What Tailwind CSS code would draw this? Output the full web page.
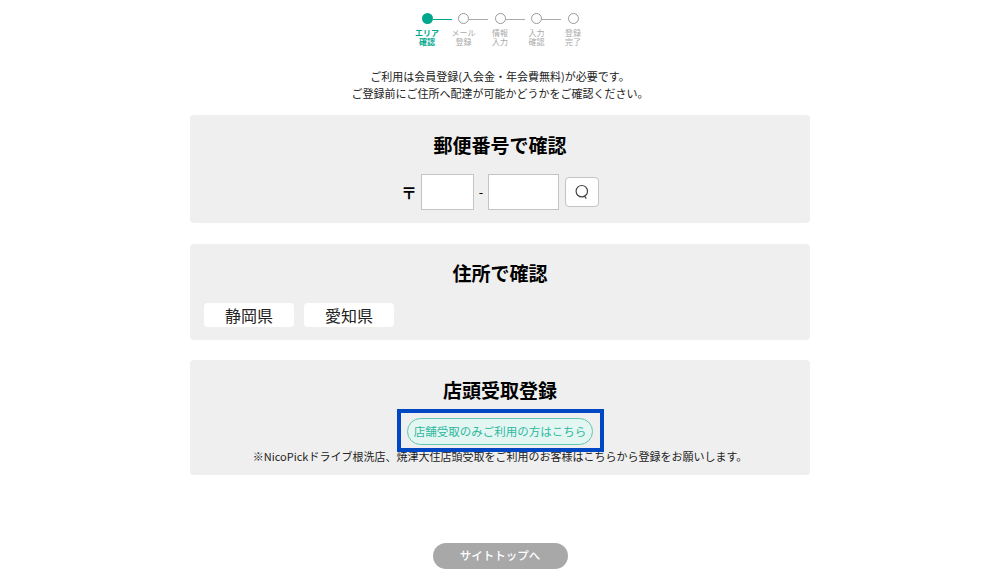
<!DOCTYPE html>
<html lang="ja">
<head>
<meta charset="utf-8">
<script src="https://cdn.jsdelivr.net/npm/@tailwindcss/browser@4"></script>
</head>
<body class="bg-white text-black font-['Noto_Sans_CJK_JP','Noto_Sans',sans-serif]">
<div class="relative w-[1000px] h-[578px] overflow-hidden flex flex-col items-center">
  <div class="flex pt-[13px] h-[68px] justify-center">
    <div class="w-[36.5px] relative flex flex-col items-center">
      <span class="absolute left-[24px] top-[5.5px] w-[19px] h-px bg-[#00a78e]"></span>
      <span class="w-[11px] h-[11px] rounded-full bg-[#00a78e]"></span>
      <span class="text-[8px] leading-[9px] mt-[4px] text-center font-bold text-[#00a78e] whitespace-nowrap">エリア<br>確認</span>
    </div>
    <div class="w-[36.5px] relative flex flex-col items-center">
      <span class="absolute left-[24px] top-[5.5px] w-[19px] h-px bg-[#aaaaaa]"></span>
      <span class="w-[11px] h-[11px] rounded-full border border-[#999999] bg-white"></span>
      <span class="text-[8px] leading-[9px] mt-[4px] text-center text-[#aaaaaa] whitespace-nowrap">メール<br>登録</span>
    </div>
    <div class="w-[36.5px] relative flex flex-col items-center">
      <span class="absolute left-[24px] top-[5.5px] w-[19px] h-px bg-[#aaaaaa]"></span>
      <span class="w-[11px] h-[11px] rounded-full border border-[#999999] bg-white"></span>
      <span class="text-[8px] leading-[9px] mt-[4px] text-center text-[#aaaaaa] whitespace-nowrap">情報<br>入力</span>
    </div>
    <div class="w-[36.5px] relative flex flex-col items-center">
      <span class="absolute left-[24px] top-[5.5px] w-[19px] h-px bg-[#aaaaaa]"></span>
      <span class="w-[11px] h-[11px] rounded-full border border-[#999999] bg-white"></span>
      <span class="text-[8px] leading-[9px] mt-[4px] text-center text-[#aaaaaa] whitespace-nowrap">入力<br>確認</span>
    </div>
    <div class="w-[36.5px] relative flex flex-col items-center">
      <span class="w-[11px] h-[11px] rounded-full border border-[#999999] bg-white"></span>
      <span class="text-[8px] leading-[9px] mt-[4px] text-center text-[#aaaaaa] whitespace-nowrap">登録<br>完了</span>
    </div>
  </div>

  <p class="text-[11px] leading-[17px] text-center text-[#222222]">ご利用は会員登録(入会金・年会費無料)が必要です。<br>ご登録前にご住所へ配達が可能かどうかをご確認ください。</p>

  <section class="mt-[13px] w-[620px] h-[108px] bg-[#efefef] rounded-[4px] flex flex-col items-center pt-[16px]">
    <h2 class="text-[19px] leading-[28px] font-bold">郵便番号で確認</h2>
    <div class="mt-[15px] flex items-center h-[36px]">
      <span class="text-[16px] font-bold mr-[4px]">〒</span>
      <span class="w-[53px] h-[36px] bg-white border border-[#c4c4c4]"></span>
      <span class="w-[14px] text-center text-[13px]">-</span>
      <span class="w-[71px] h-[36px] bg-white border border-[#c4c4c4]"></span>
      <span class="ml-[6px] w-[34px] h-[30px] bg-white border border-[#c4c4c4] rounded-[4px] flex items-center justify-center">
        <svg width="16" height="16" viewBox="0 0 16 16" fill="none" stroke="#444444" stroke-width="1.2"><circle cx="7.8" cy="7.2" r="5.7"/><path d="M10.5 12l1.8 2.6"/></svg>
      </span>
    </div>
  </section>

  <section class="mt-[21px] w-[620px] h-[96px] bg-[#efefef] rounded-[4px] flex flex-col pt-[15px]">
    <h2 class="text-[19px] leading-[28px] font-bold text-center">住所で確認</h2>
    <div class="mt-[16px] pl-[14px] flex gap-[10px]">
      <span class="w-[90px] h-[24px] bg-white rounded-[4px] flex items-center justify-center text-[16px] text-[#222222]">静岡県</span>
      <span class="w-[90px] h-[24px] bg-white rounded-[4px] flex items-center justify-center text-[16px] text-[#222222]">愛知県</span>
    </div>
  </section>

  <section class="mt-[20px] w-[620px] h-[115px] bg-[#efefef] rounded-[4px] flex flex-col items-center pt-[16px]">
    <h2 class="text-[19px] leading-[28px] font-bold">店頭受取登録</h2>
    <span class="mt-[14px] w-[186px] h-[27px] rounded-full border border-[#5cc8b4] bg-[#e3f6f2] flex items-center justify-center text-[11.5px] text-[#2fb8a0]">店舗受取のみご利用の方はこちら</span>
    <p class="mt-[3px] text-[11px] leading-[16px] text-[#222222] whitespace-nowrap">※NicoPickドライブ根洗店、焼津大住店頭受取をご利用のお客様はこちらから登録をお願いします。</p>
  </section>

  <a class="mt-[68px] w-[135px] h-[26px] rounded-full bg-[#a8a8a8] text-white text-[11.5px] font-medium flex items-center justify-center">サイトトップへ</a>

  <div class="absolute left-[397px] top-[409px] w-[207px] h-[43px] border-[4px] border-[#0047c4]"></div>
</div>
</body>
</html>
